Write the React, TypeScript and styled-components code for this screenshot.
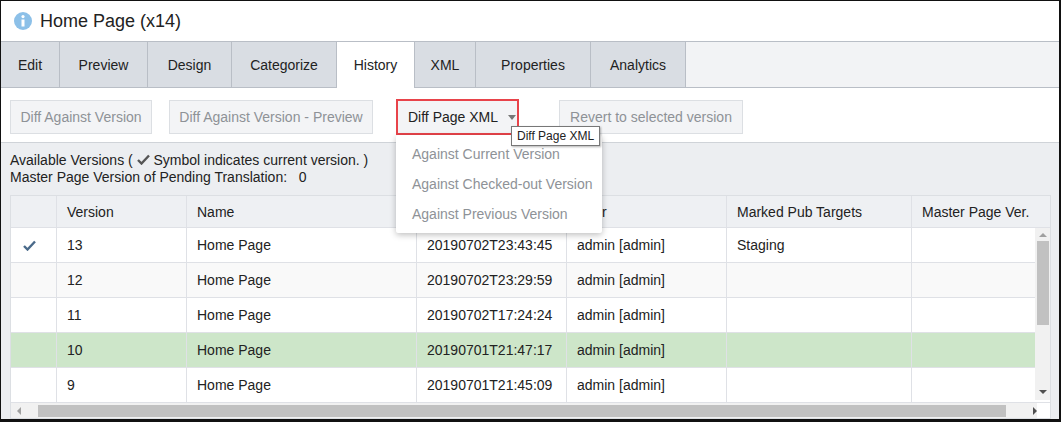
import React from "react";
import styled, { createGlobalStyle } from "styled-components";

const G = createGlobalStyle`
  body { margin: 0; font-family: "Liberation Sans", Arial, sans-serif; font-size: 14px; color: #222; }
  * { box-sizing: border-box; }
`;

const Win = styled.div`
  width: 1061px; height: 422px; border: 1px solid #111; border-width: 1px 2px 3px 1px;
  display: flex; flex-direction: column; background: #fff; overflow: hidden;
`;
const Title = styled.div`
  height: 41px; display: flex; align-items: center; gap: 8px; padding-left: 13px;
  font-size: 18px; color: #222; border-bottom: 1px solid #b9bec6;
`;
const Tabs = styled.div`
  height: 46px; display: flex; background: #f2f3f5; border-bottom: 1px solid #b9bec6;
`;
const Tab = styled.div<{ $w: number; $active?: boolean }>`
  width: ${p => p.$w}px; display: flex; align-items: center; justify-content: center;
  background: ${p => (p.$active ? "#fff" : "#d9dde3")}; border-right: 1px solid #b9bec6;
  margin-bottom: ${p => (p.$active ? "-1px" : "0")}; color: #222;
`;
const Toolbar = styled.div`
  height: 55px; display: flex; align-items: center; padding: 4px 0 0 9px; border-bottom: 1px solid #cfd3d8;
`;
const Btn = styled.div<{ $w: number; $ml: number }>`
  width: ${p => p.$w}px; height: 34px; margin-left: ${p => p.$ml}px; display: flex; align-items: center;
  justify-content: center; background: #f3f4f6; border: 1px solid #dcdfe3; color: #8e9297; white-space: nowrap;
`;
const DdWrap = styled.div`
  position: relative; margin-left: 23px;
`;
const Dd = styled.div`
  width: 123px; height: 36px; border: 2px solid #e8434a; display: flex; align-items: center;
  padding-left: 10px; gap: 10px; color: #222; background: #f3f4f6; white-space: nowrap;
`;
const Caret = styled.span`
  width: 0; height: 0; border-left: 4px solid transparent; border-right: 4px solid transparent;
  border-top: 5px solid #777;
`;
const Tip = styled.div`
  position: absolute; left: 115px; top: 27px; background: #fff; border: 1px solid #777;
  font-size: 12px; padding: 2px 5px; white-space: nowrap; box-shadow: 1px 1px 2px rgba(0,0,0,.3); z-index: 3;
`;
const Menu = styled.div`
  position: absolute; left: 0; top: 36px; width: 206px; background: #fff; z-index: 2;
  box-shadow: 0 2px 6px rgba(0,0,0,.25); border-radius: 2px; padding: 4px 0;
`;
const MenuItem = styled.div`
  height: 30px; display: flex; align-items: center; padding-left: 16px; color: #8e9297; white-space: nowrap;
`;
const Body = styled.div`
  flex: 1; background: #eceef1; padding: 9px 8px 0 9px; display: flex; flex-direction: column;
`;
const Info = styled.div` line-height: 17px; color: #222; `;
const TableBox = styled.div`
  margin-top: 9px; width: 1041px; background: #fff; border: 1px solid #dcdfe3; position: relative;
  display: flex; flex-direction: column;
`;
const cols = "46px 130px 230px 150px 160px 185px 125px 15px";
const Row = styled.div<{ $bg?: string; $h?: number }>`
  display: grid; grid-template-columns: ${cols}; height: ${p => p.$h ?? 35}px;
  background: ${p => p.$bg ?? "#fff"}; border-bottom: 1px solid #dfe1e6;
`;
const Cell = styled.div<{ $pad?: number }>`
  display: flex; align-items: center; padding-left: ${p => p.$pad ?? 10}px; border-right: 1px solid #dfe1e6;
  white-space: nowrap; overflow: hidden;
  &:nth-child(7), &:nth-child(8) { border-right: none; }
`;
const VScroll = styled.div`
  position: absolute; right: 0; top: 32px; width: 15px; height: 172px; background: #f1f1f1;
  display: flex; flex-direction: column; align-items: center;
`;
const VThumb = styled.div` width: 12px; height: 84px; background: #c1c1c1; margin-top: 4px; `;
const HScroll = styled.div`
  height: 15px; background: #f1f1f1; display: flex; align-items: center; width: 1026px;
`;
const HThumb = styled.div` height: 12px; width: 975px; background: #c1c1c1; margin-left: 17px; `;
const Arrow = styled.span<{ $dir: string }>`
  width: 0; height: 0; border: 4px solid transparent;
  ${p => p.$dir === "up" ? "border-bottom: 4px solid #a0a0a0; border-top-width: 0;" : ""}
  ${p => p.$dir === "down" ? "border-top: 4px solid #505050; border-bottom-width: 0;" : ""}
  ${p => p.$dir === "left" ? "border-right: 4px solid #a0a0a0; border-left-width: 0; margin-left: 6px;" : ""}
  ${p => p.$dir === "right" ? "border-left: 4px solid #505050; border-right-width: 0; margin-left: 27px;" : ""}
`;

const Check = ({ c = "#4a6a8a" }: { c?: string }) => (
  <svg width="13" height="11" viewBox="0 0 13 11"><path d="M1 6 L4.5 9.5 L12 1.5" stroke={c} strokeWidth="2.4" fill="none" /></svg>
);

const rows = [
  ["13", "20190702T23:43:45", "Staging", true, "#fff"],
  ["12", "20190702T23:29:59", "", false, "#f9f9f9"],
  ["11", "20190702T17:24:24", "", false, "#fff"],
  ["10", "20190701T21:47:17", "", false, "#cde6c9"],
  ["9", "20190701T21:45:09", "", false, "#fff"],
] as const;

export default function App() {
  return (
    <Win>
      <G />
      <Title>
        <svg width="18" height="18" viewBox="0 0 18 18"><circle cx="9" cy="9" r="9" fill="#8cc0e8" /><circle cx="9" cy="4.6" r="1.6" fill="#fff" /><rect x="7.5" y="7.5" width="3" height="7" fill="#fff" /></svg>
        <span>Home Page (x14)</span>
      </Title>
      <Tabs>
        <Tab $w={59}>Edit</Tab><Tab $w={88}>Preview</Tab><Tab $w={84}>Design</Tab>
        <Tab $w={105}>Categorize</Tab><Tab $w={78} $active>History</Tab><Tab $w={61}>XML</Tab>
        <Tab $w={115}>Properties</Tab><Tab $w={95}>Analytics</Tab>
      </Tabs>
      <Toolbar>
        <Btn $w={142} $ml={0}>Diff Against Version</Btn>
        <Btn $w={204} $ml={17}>Diff Against Version - Preview</Btn>
        <DdWrap>
          <Dd>Diff Page XML <Caret /></Dd>
          <Tip>Diff Page XML</Tip>
          <Menu>
            <MenuItem>Against Current Version</MenuItem>
            <MenuItem>Against Checked-out Version</MenuItem>
            <MenuItem>Against Previous Version</MenuItem>
          </Menu>
        </DdWrap>
        <Btn $w={184} $ml={40}>Revert to selected version</Btn>
      </Toolbar>
      <Body>
        <Info>Available Versions ( <Check c="#555" /> Symbol indicates current version. )</Info>
        <Info>Master Page Version of Pending Translation:&nbsp;&nbsp; 0</Info>
        <TableBox>
          <Row $bg="#eef0f3" $h={32}>
            <Cell /><Cell>Version</Cell><Cell>Name</Cell><Cell>Date</Cell><Cell>User</Cell>
            <Cell>Marked Pub Targets</Cell><Cell>Master Page Ver.</Cell><Cell />
          </Row>
          {rows.map(r => (
            <Row key={r[0]} $bg={r[4]}>
              <Cell $pad={12}>{r[3] ? <Check /> : null}</Cell>
              <Cell>{r[0]}</Cell><Cell>Home Page</Cell><Cell>{r[1]}</Cell>
              <Cell>admin [admin]</Cell><Cell>{r[2]}</Cell><Cell /><Cell />
            </Row>
          ))}
          <VScroll><Arrow $dir="up" style={{ marginTop: 5 }} /><VThumb /><div style={{ flex: 1 }} /><Arrow $dir="down" style={{ marginBottom: 6 }} /></VScroll>
          <HScroll><Arrow $dir="left" /><HThumb /><Arrow $dir="right" /></HScroll>
        </TableBox>
      </Body>
    </Win>
  );
}
